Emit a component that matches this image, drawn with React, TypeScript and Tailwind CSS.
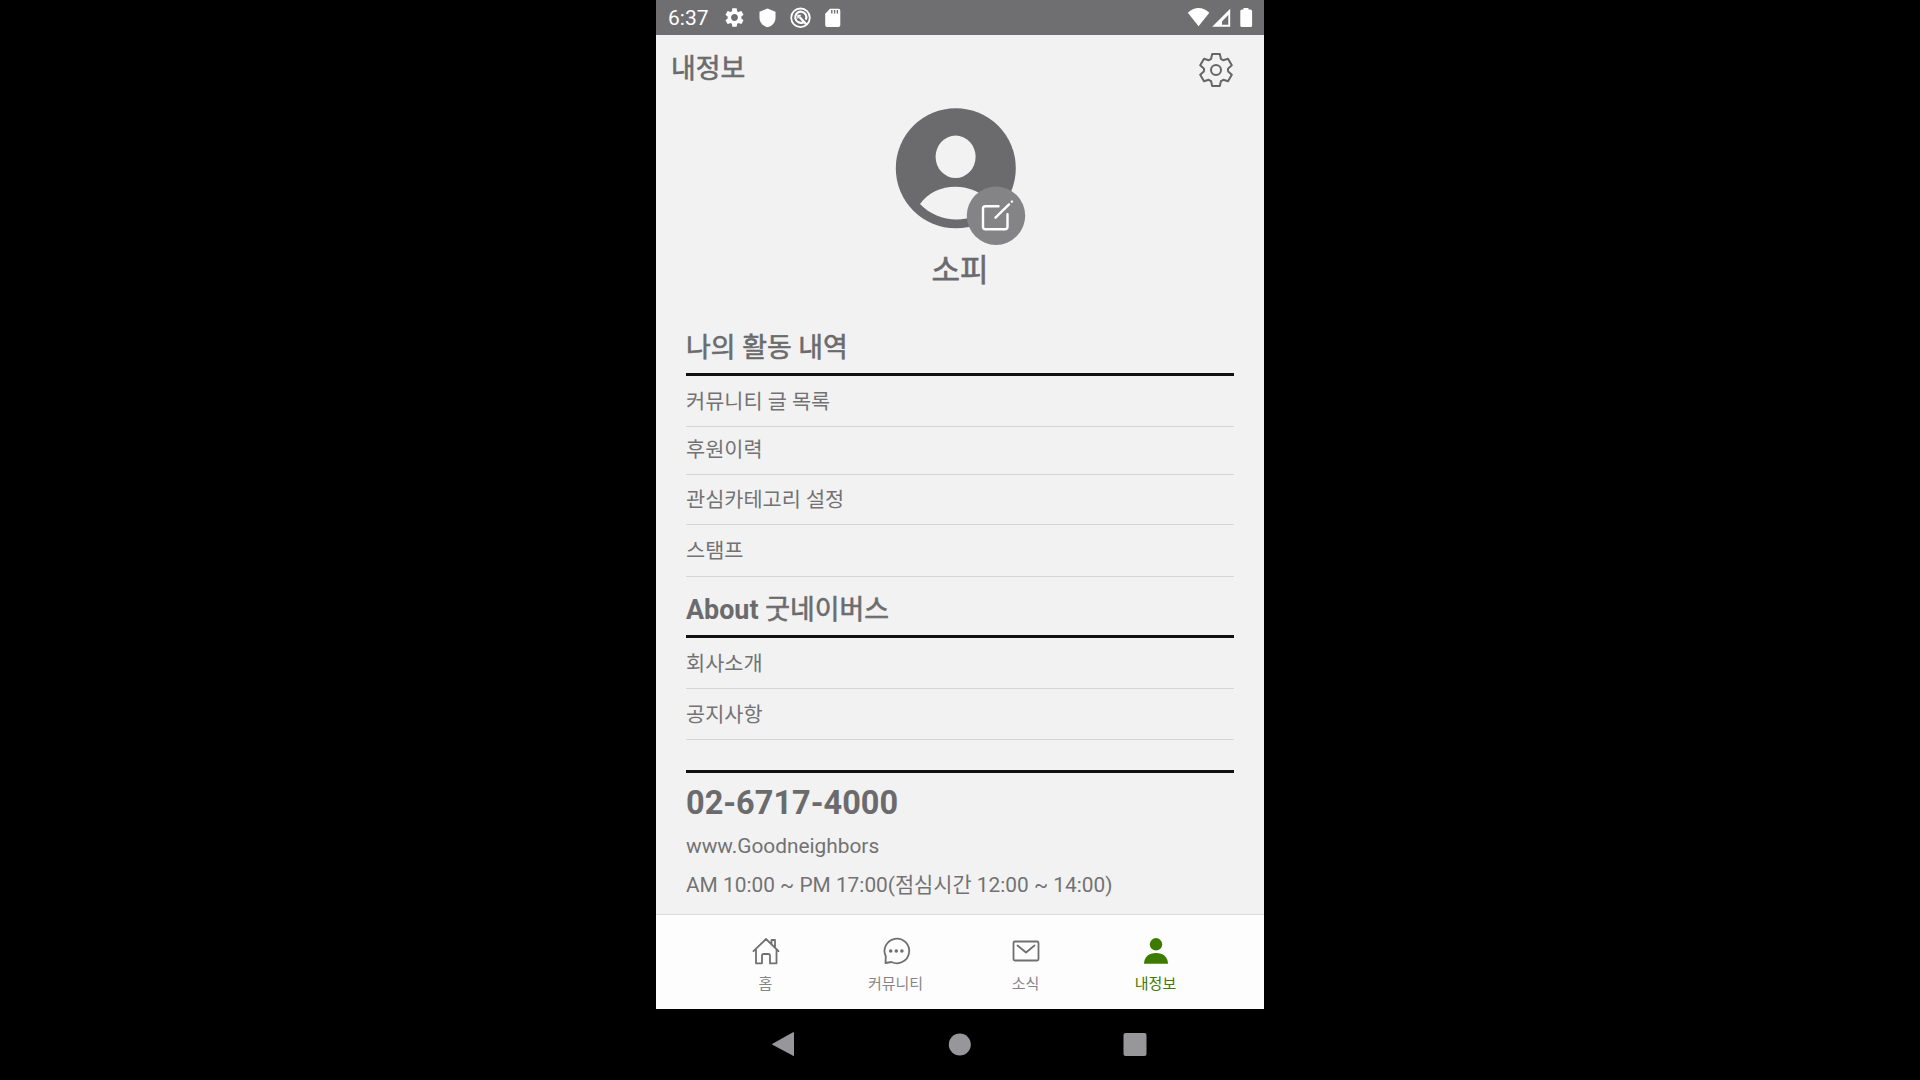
import React from "react";
import { MdSettings } from "react-icons/md";

const FONT = "font-[Roboto,'Noto_Sans_CJK_KR',sans-serif]";

function StatusBar() {
  return (
    <div className="flex h-[35px] items-center bg-[#6f6f71] text-white">
      <span className="ml-[12px] w-[56px] pt-[2px] text-[21px] leading-[35px]">6:37</span>
      <MdSettings className="-mt-px -ml-px mr-px h-[23px] w-[23px] shrink-0" />
      <svg className="ml-[9px] h-[35px] w-[22px] shrink-0" viewBox="0 0 22 35" fill="currentColor">
        <path d="M11.500 8.500l8 3.200v6.200c0 4.200-3.200 8-8 9.400-4.800-1.400-8-5.200-8-9.400v-6.200z" />
      </svg>
      <svg className="ml-[10px] h-[35px] w-[24px] shrink-0" viewBox="0 0 24 35" fill="none" stroke="currentColor">
        <circle cx="12.500" cy="17.800" r="9.300" strokeWidth="1.800" />
        <path d="M15.500 22.200a5.600 5.600 0 1 1 2.400-2.600" strokeWidth="2.200" />
        <path d="M11.500 17l7 7.500" strokeWidth="2.400" />
        <path d="M9.300 14.800h4.200l-4.200 4.200z" fill="currentColor" stroke="none" />
      </svg>
      <svg className="ml-[9px] h-[35px] w-[22px] shrink-0" viewBox="0 0 22 35">
        <path d="M9 8.700h8.300a2 2 0 0 1 2 2V25a2 2 0 0 1-2 2H6.200a2 2 0 0 1-2-2V13.700z" fill="#fff" />
        <path d="M10.800 10v3.500M13.600 10v3.500M16.400 10v3.500" stroke="#6f6f71" strokeWidth="1.400" />
      </svg>
      <svg className="mr-[10px] ml-auto h-[35px] w-[70px] shrink-0" viewBox="0 0 70 35" fill="#fff">
        <path d="M3.800 12.800C10 6.300 19 6.300 25.300 12.800L14.600 26.200z" />
        <path fillRule="evenodd" d="M46.200 8.800v18H28.200zM44.300 15l-6.300 6.500v3.200h6.300z" />
        <path d="M59.500 8h5v1.600h2a1.600 1.600 0 0 1 1.600 1.600v14.200a1.600 1.600 0 0 1-1.600 1.600h-8.600a1.600 1.600 0 0 1-1.600-1.600V11.200a1.600 1.600 0 0 1 1.600-1.600h1.600z" />
      </svg>
    </div>
  );
}

function GearIcon() {
  return (
    <svg className="h-[36px] w-[36px]" viewBox="-18 -18 36 36" fill="none" stroke="#656567" strokeWidth="2" strokeLinejoin="round">
      <path d="M-3.800-16H3.800L4.900-11.200Q6-10.500 7.300-9.800L12-11.300L15.800-4.700L12.200-1.600Q11.500 0 12.200 1.600L15.800 4.700L12 11.300L7.300 9.800Q6 10.500 4.900 11.200L3.800 16H-3.800L-4.900 11.200Q-6 10.500-7.300 9.800L-12 11.300L-15.800 4.700L-12.200 1.600Q-11.500 0-12.200-1.600L-15.800-4.700L-12-11.300L-7.300-9.800Q-6-10.500-4.900-11.200Z" />
      <circle r="5" />
    </svg>
  );
}

function Avatar() {
  return (
    <svg className="mx-auto block h-[140px] w-[132px]" viewBox="0 0 132 140">
      <circle cx="61.800" cy="60.300" r="60" fill="#6b6b6d" />
      <ellipse cx="61.600" cy="48.800" rx="20" ry="21.200" fill="#f2f2f2" />
      <path d="M26 96C42 73 80 73 98 96C80 116.500 45 116.500 26 96Z" fill="#f2f2f2" />
      <circle cx="102" cy="107.700" r="29.200" fill="#848486" />
      <g fill="none" stroke="#fff" strokeWidth="2.400" strokeLinecap="round">
        <path d="M104.500 98.200h-13a2.500 2.500 0 0 0-2.500 2.500v18a2.500 2.500 0 0 0 2.500 2.500h19.500a2.500 2.500 0 0 0 2.500-2.500v-12.500" />
        <path d="M101.500 109.700L115 96.400M117.800 93.700l.2-.2" />
      </g>
    </svg>
  );
}

function SectionTitle({ children, className }: { children: React.ReactNode; className: string }) {
  return (
    <h2 className={"border-b-[3px] border-[#111] text-[26.900px] font-bold " + className}>{children}</h2>
  );
}

const thick = "font-normal [-webkit-text-stroke:0.600px_#6b6b6d]";

function Row({ label, className }: { label: string; className: string }) {
  return (
    <li className={"flex items-center border-b border-[#d6d6d8] text-[20.800px] text-[#727274] " + className}>
      <span className="pt-px leading-[30px]">{label}</span>
    </li>
  );
}

function Tab({ label, active, children }: { label: string; active?: boolean; children: React.ReactNode }) {
  return (
    <div className={"flex w-[130px] flex-col items-center pt-[20px] " + (active ? "text-[#3d7a00]" : "text-[#707073]")}>
      <svg className="h-[32px] w-[32px]" viewBox="-16 -16 32 32" fill="none" stroke="currentColor" strokeWidth="1.800" strokeLinejoin="round" strokeLinecap="round">
        {children}
      </svg>
      <span className={"mt-[7px] text-[15px] leading-[20px] " + (active ? "" : "text-[#858588]")}>{label}</span>
    </div>
  );
}

export default function App() {
  return (
    <div className={"flex h-[1080px] w-[1920px] justify-center overflow-hidden bg-black " + FONT}>
      <div className="flex w-[608px] flex-col whitespace-nowrap text-[#6b6b6d]">
        <StatusBar />
        <main className="h-[879px] bg-[#f2f2f2]">
          <header className="flex h-[73px] items-start justify-between pr-[30px] pl-[15px]">
            <h1 className={"mt-[14px] text-[26.900px] leading-[40px] " + thick}>내정보</h1>
            <div className="mt-[17px]"><GearIcon /></div>
          </header>
          <Avatar />
          <div className={"mt-[3px] text-center text-[31px] leading-[40px] " + thick}>소피</div>
          <div className="px-[30px]">
            <SectionTitle className="mt-[35px] h-[50px] leading-[44px]">
              <span className={thick}>나의 활동 내역</span>
            </SectionTitle>
            <ul>
              <Row label="커뮤니티 글 목록" className="h-[51px]" />
              <Row label="후원이력" className="h-[48px] pb-[3px]" />
              <Row label="관심카테고리 설정" className="h-[50px]" />
              <Row label="스탬프" className="h-[52px]" />
            </ul>
            <SectionTitle className="h-[61px] pt-[11px] leading-[44px]">
              About <span className={thick}>굿네이버스</span>
            </SectionTitle>
            <ul>
              <Row label="회사소개" className="h-[51px]" />
              <Row label="공지사항" className="h-[51px]" />
            </ul>
            <div className="mt-[30px] border-t-[3px] border-[#111]">
              <p className="mt-[10px] text-[32.500px] leading-[40px] font-bold">02-6717-4000</p>
              <p className="mt-[8px] text-[20.850px] leading-[30px] text-[#727274]">www.Goodneighbors</p>
              <p className="mt-[9px] text-[20.850px] leading-[30px] text-[#727274]">AM 10:00 ~ PM 17:00(점심시간 12:00 ~ 14:00)</p>
            </div>
          </div>
        </main>
        <nav className="flex h-[95px] justify-center border-t border-[#dcdcde] bg-[#fdfdfd] pl-px">
          <Tab label="홈">
            <path d="M-12.500.2L0-12L12.500.2M-10-1.500V12.300H-4V4.500A1.500 1.500 0 0 1-2.500 3H2.500A1.500 1.500 0 0 1 4 4.500V12.300H10.500V-1.500M5.500-7V-11H9V-3.500" />
          </Tab>
          <Tab label="커뮤니티">
            <path d="M-10.200 5.300A12.300 12.300 0 1 1-4.500 11L-10.500 12Z" />
            <g fill="currentColor" stroke="none">
              <circle cx="-5.300" r="1.800" />
              <circle cx=".3" r="1.800" />
              <circle cx="5.900" r="1.800" />
            </g>
          </Tab>
          <Tab label="소식">
            <rect x="-12.500" y="-9.500" width="25" height="19" rx="1.500" />
            <path d="M-8.500-5.500L0 1.500L8.500-5.500" />
          </Tab>
          <Tab label="내정보" active>
            <g fill="currentColor" stroke="none">
              <circle cy="-6.700" r="6.200" />
              <path d="M-12 12.800C-12 6 -7 2 0 2S12 6 12 12.800Z" />
            </g>
          </Tab>
        </nav>
        <svg className="h-[71px] w-[608px]" viewBox="0 0 608 71" fill="#97979a">
          <path d="M138 23.500V47.200L116.500 35.800Q116 35.300 116.500 34.800L137 23.200Z" />
          <circle cx="303.800" cy="35.500" r="11" />
          <rect x="467.500" y="24" width="23" height="23" rx="2" />
        </svg>
      </div>
    </div>
  );
}
